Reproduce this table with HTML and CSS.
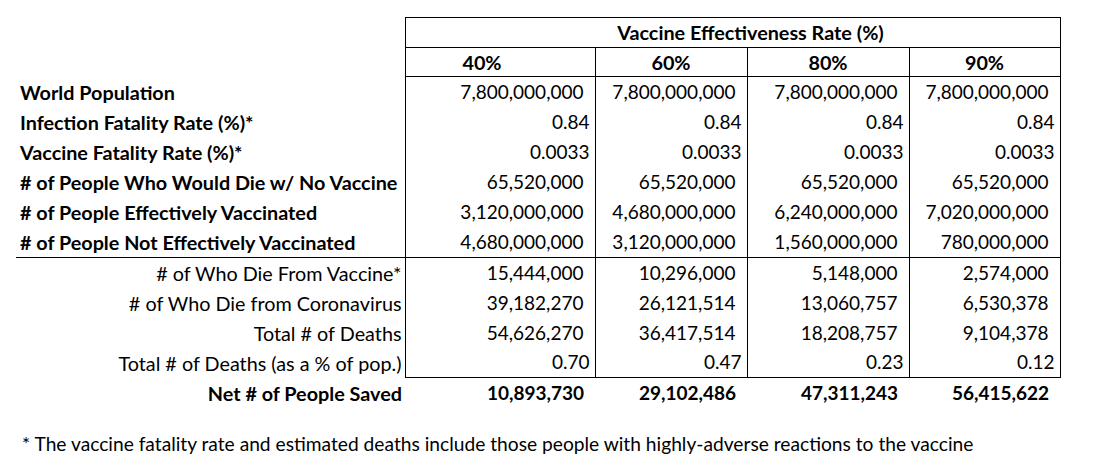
FILE: index.html
```html
<!DOCTYPE html>
<html>
<head>
<meta charset="utf-8">
<link rel="stylesheet" href="styles.css">
</head>
<body>
<table class="sheet">
  <colgroup>
    <col class="c-label">
    <col class="c1">
    <col class="c2">
    <col class="c3">
    <col class="c4">
  </colgroup>
  <tr class="head">
    <td class="blank"></td>
    <th class="title" colspan="4">Vaccine Effectiveness Rate (%)</th>
  </tr>
  <tr class="head">
    <td class="blank"></td>
    <th class="pct first">40%</th>
    <th class="pct">60%</th>
    <th class="pct">80%</th>
    <th class="pct">90%</th>
  </tr>
  <tr>
    <td class="lbl">World Population</td>
    <td class="num">7,800,000,000</td><td class="num">7,800,000,000</td><td class="num">7,800,000,000</td><td class="num">7,800,000,000</td>
  </tr>
  <tr>
    <td class="lbl">Infection Fatality Rate (%)*</td>
    <td class="dec">0.84</td><td class="dec">0.84</td><td class="dec">0.84</td><td class="dec">0.84</td>
  </tr>
  <tr>
    <td class="lbl">Vaccine Fatality Rate (%)*</td>
    <td class="dec">0.0033</td><td class="dec">0.0033</td><td class="dec">0.0033</td><td class="dec">0.0033</td>
  </tr>
  <tr>
    <td class="lbl">&#35; of People Who Would Die w/ No Vaccine</td>
    <td class="num">65,520,000</td><td class="num">65,520,000</td><td class="num">65,520,000</td><td class="num">65,520,000</td>
  </tr>
  <tr>
    <td class="lbl">&#35; of People Effectively Vaccinated</td>
    <td class="num">3,120,000,000</td><td class="num">4,680,000,000</td><td class="num">6,240,000,000</td><td class="num">7,020,000,000</td>
  </tr>
  <tr class="sep">
    <td class="lbl">&#35; of People Not Effectively Vaccinated</td>
    <td class="num">4,680,000,000</td><td class="num">3,120,000,000</td><td class="num">1,560,000,000</td><td class="num">780,000,000</td>
  </tr>
  <tr>
    <td class="rlbl">&#35; of Who Die From Vaccine*</td>
    <td class="num">15,444,000</td><td class="num">10,296,000</td><td class="num">5,148,000</td><td class="num">2,574,000</td>
  </tr>
  <tr>
    <td class="rlbl">&#35; of Who Die from Coronavirus</td>
    <td class="num">39,182,270</td><td class="num">26,121,514</td><td class="num">13,060,757</td><td class="num">6,530,378</td>
  </tr>
  <tr>
    <td class="rlbl">Total &#35; of Deaths</td>
    <td class="num">54,626,270</td><td class="num">36,417,514</td><td class="num">18,208,757</td><td class="num">9,104,378</td>
  </tr>
  <tr class="last">
    <td class="rlbl">Total &#35; of Deaths (as a % of pop.)</td>
    <td class="dec">0.70</td><td class="dec">0.47</td><td class="dec">0.23</td><td class="dec">0.12</td>
  </tr>
  <tr class="net">
    <td class="rlbl">Net &#35; of People Saved</td>
    <td class="num">10,893,730</td><td class="num">29,102,486</td><td class="num">47,311,243</td><td class="num">56,415,622</td>
  </tr>
</table>
<p class="note">* The vaccine fatality rate and estimated deaths include those people with highly-adverse reactions to the vaccine</p>
</body>
</html>
```

FILE: styles.css
```css
html, body {
  margin: 0;
  padding: 0;
  background: #fff;
}

body {
  font-family: "Lato", "Noto Sans", sans-serif;
  color: #000;
  font-size: 19.8px;
}

.sheet {
  margin: 17px 0 0 16px;
  border-collapse: collapse;
  table-layout: fixed;
  width: 1044px;
}

.c-label { width: 389px; }
.c1 { width: 190px; }
.c2 { width: 152px; }
.c3 { width: 162px; }
.c4 { width: 151px; }

.sheet td, .sheet th {
  height: 30px;
  padding: 0;
  white-space: nowrap;
  vertical-align: middle;
  line-height: 20px;
}

.sheet .head td, .sheet .head th {
  height: 28.5px;
}

.sheet .sep td, .sheet .last td {
  height: 29.5px;
}

.sheet th {
  font-weight: 700;
  text-align: center;
  border: 1px solid #000;
}

.sheet .title {
  padding-left: 36px;
}

.sheet .pct.first {
  padding-right: 36px;
}

.blank {
  border: none;
}

.sheet .lbl {
  font-weight: 700;
  text-align: left;
  padding-left: 4px;
}

.sheet .rlbl {
  text-align: right;
  padding-right: 3px;
}

.num, .dec {
  text-align: right;
  font-size: 19px;
  border-left: 1px solid #000;
  border-right: 1px solid #000;
}

.sheet .num { padding-right: 11px; }
.sheet .dec { padding-right: 5px; }

.sep td {
  border-bottom: 1px solid #000;
}

.last td.num, .last td.dec {
  border-bottom: 1px solid #000;
}

.sheet .net td {
  font-weight: 700;
  border: none;
}

.note {
  margin: 24px 0 0 22px;
  font-size: 19.2px;
}
```
